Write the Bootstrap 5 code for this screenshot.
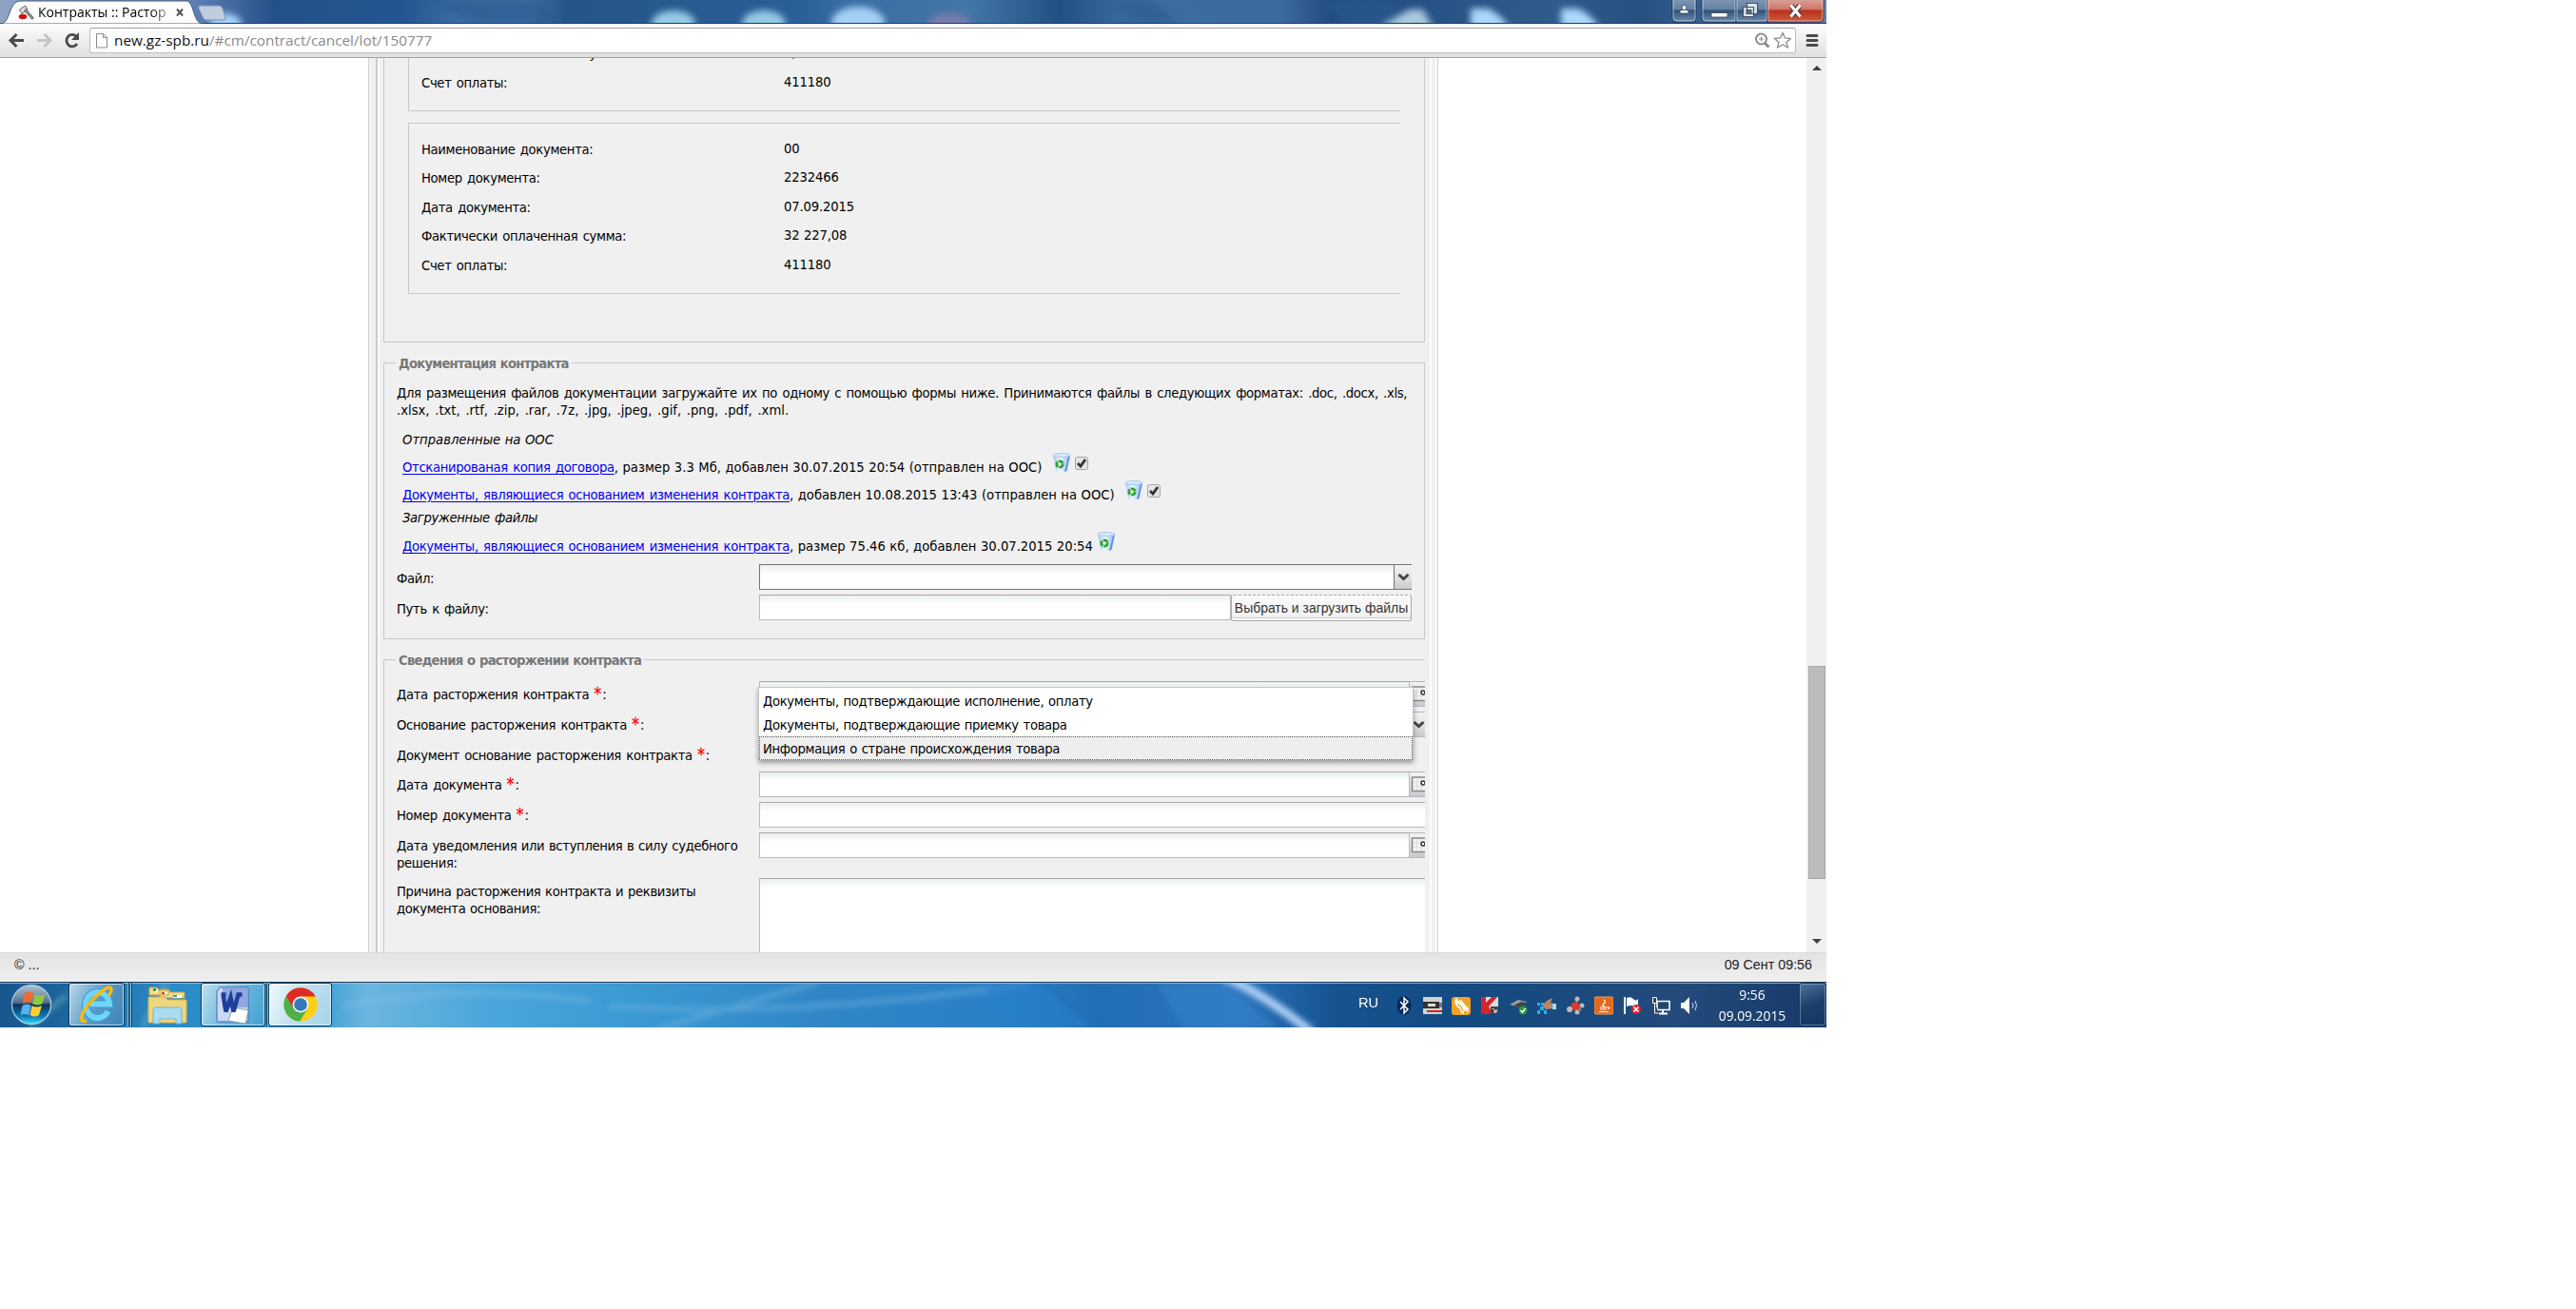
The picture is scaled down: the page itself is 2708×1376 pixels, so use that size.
<!DOCTYPE html>
<html lang="ru">
<head>
<meta charset="utf-8">
<title>Контракты :: Расторжение</title>
<link href="https://cdn.jsdelivr.net/npm/bootstrap@5.3.0/dist/css/bootstrap.min.css" rel="stylesheet">
<style>
body{background:#fff;color:#000;overflow:hidden}
.screen{width:1920px;height:1080px;overflow:hidden;font:14.67px/18px "DejaVu Sans Condensed","DejaVu Sans",sans-serif;font-stretch:condensed}
.screen span,.screen a{white-space:nowrap}
.titlebar{height:25px;background:#24548c;flex:none}
.backdrop{position:absolute;left:0;top:0}
.uifont{font-family:"Open Sans",sans-serif;font-stretch:normal}
.tabtitle{margin-left:40px;width:138px;font-size:14px;line-height:21px;padding-top:2px;height:25px;-webkit-mask-image:linear-gradient(90deg,#000 118px,rgba(0,0,0,.3) 138px)}
.toolbar{height:36px;background:linear-gradient(#fdfdfd,#e0e0e0);border-bottom:1px solid #a3a3a3;flex:none;padding:4px 8px 0 6px}
.omnibox{height:27px;width:1794px;margin-left:9px;background:#fff;border:1px solid #bdbdbd;border-top-color:#a0a0a0;border-radius:3px;padding-left:6px}
.omnibox .host{font-size:15.3px;line-height:25px;color:#8a8a8a;margin-left:7px}
.omnibox b{font-weight:400;color:#111}
.viewport{height:940px;overflow:hidden;flex:none;background:#fff}
.panelbox{width:1125px;height:940px;margin-left:387px;padding:0 14px 0 16px;letter-spacing:-.33px;word-spacing:1.45px;background:linear-gradient(90deg,#cfcfcf 1px,#f6f6f6 1px 2px,#f0f0f0 2px 8px,#ccc 8px 10px,#fbfbfb 10px 12px,#f0f0f0 12px 1116px,#fcfcfc 1116px 1118px,#f0f0f0 1118px 1122px,#fcfcfc 1122px 1124px,#cfcfcf 1124px)}
.tight{word-spacing:.7px}
.plain{letter-spacing:0;word-spacing:.3px}
.exts{letter-spacing:0;word-spacing:1.5px}
.fset{border:1px solid #c8c8c8;flex:none}
.fset-a{height:299px;border-top:0;padding-left:25px}
.fset-b{height:291px;margin-top:21px}
.fset-c{height:400px;margin-top:21px;border-right:0}
.docbox{border:1px solid #c8c8c8;border-right:0;width:1043px;padding-left:13px}
.docbox.cut{height:56px;border-top:0;padding-top:0;overflow:hidden}
.docbox.whole{height:180px;margin-top:12px;padding-top:11.5px}
.docrow{height:30.5px}
.docbox.cut .docrow:first-child{margin-top:-20px}
.docrow>:first-child{width:381px}
.docrow>:last-child{margin-top:-2px;letter-spacing:-.15px;word-spacing:.5px}
.fhead{font-weight:700;color:#777;background:#f0f0f0;width:fit-content;margin:-9px 0 0 12px;padding:0 3px;height:18px;letter-spacing:-.75px;word-spacing:.8px}
.bodypad{padding-left:13px;padding-top:13px}
.fset-c .bodypad{padding-top:13px}
.filelink{height:18px;margin-left:6px}
.filelink svg{margin-top:-6px}
.filelink a{color:#00e;text-decoration:underline;text-underline-offset:2px;text-decoration-thickness:1px}
.gap6{margin-top:6px}.gap10{margin-top:10px}.gap11{margin-top:11px}.gap12{margin-top:12px}.gap13{margin-top:13px}.gap5{margin-top:5px}
.fi{height:27px;background:linear-gradient(#eaeeee,#fff 9px);border:1px solid #b9b9b9;border-top-color:#aaa}
.fi.dark{border-color:#737373}
.w-date{width:684px}.w-file{width:668px}.w-path{width:496px}.w-open{width:700px}
.area{height:110px}
.trig{height:27px;width:16px;flex:none;overflow:hidden;background:linear-gradient(#f4f4f4,#ddd 60%,#c9c9c9);border-top:1px solid #b5b5b5;border-bottom:1px solid #b5b8c8}
.trig.dark{width:18px;border-color:#737373}
.lab{width:381px;flex:none;padding-top:6px}
.fset-c .lab{padding-top:5px}
.r31{height:31px}.r32{height:32px}.r48{height:48px}
.req{color:#f00;font-weight:400;font-size:17px;line-height:10px;letter-spacing:1px;-webkit-text-stroke:.3px #f00}
.upbtn{width:190px;height:28px;border:1px solid #aaa;border-top-style:dashed;border-radius:3px;background:linear-gradient(#fafafa,#f0f0f0);box-shadow:inset 0 -2px 0 #fff,inset 0 -3px 0 #ccc;color:#333;font:13.95px/27px "Liberation Sans",sans-serif;text-align:center;letter-spacing:0;word-spacing:0}
.dd{position:absolute;left:-1px;top:6px;width:689px;height:77px;background:#fff;border:1px solid #c4c4c4;border-bottom-color:#999;box-shadow:0 3px 5px rgba(0,0,0,.35);z-index:5;padding-top:3px;word-spacing:.9px}
.ddi{height:24.5px;line-height:21px;padding-left:4px}
.ddi.sel{background:#eee;outline:1px dotted #555;outline-offset:-1px;line-height:25px;margin-top:-1px;height:25px}
.sbar{width:21px;background:#f0f0f0;margin-left:auto}
.sthumb{width:18px;height:224px;background:#bcbcbc;border:1px solid #a8a8a8;margin-top:619px}
.statusline{height:31px;flex:none;background:linear-gradient(#e4e4e4,#efefef);border-top:1px solid #d9d9d9;padding:0 15px 0 15px;font-family:"Liberation Sans",sans-serif;font-size:14.3px;line-height:25px;color:#222}
.taskbar{height:48px;flex:none;background:#2b86c8}
.tbtn{height:46px;border:1px solid #0d3a5c;border-radius:3px;box-shadow:inset 0 0 0 1px rgba(255,255,255,.65);flex:none}
.tb-ie{width:59px;margin-left:17px;background:linear-gradient(115deg,#b9d8ea,#5d9ac6 50%,#3e83b8)}
.tb-word{width:68px;margin-left:14px;background:linear-gradient(115deg,#bfe0ef,#6cb8dd 50%,#45a2d3)}
.tb-chrome{width:67px;margin-left:3px;background:linear-gradient(115deg,#f2fafd,#bfe0ef 50%,#a5d4ea)}
.tb-show{width:29px;margin-left:4px;background:linear-gradient(160deg,#4d739c,#1b3e6b 50%,#173762);box-shadow:inset 0 0 0 1px rgba(255,255,255,.3)}
.orb{margin-left:11px}
.folder{margin-left:24px}
.lang{font:14.6px/18px "Liberation Sans",sans-serif;margin-bottom:4px}
.tray{margin-left:17px;margin-top:2px;gap:10px}
.clock{width:90px;margin-left:11px;margin-top:1px;color:#fff;text-align:center;font-size:13.8px;line-height:22px}
</style>
</head>
<body>
<div class="screen d-flex flex-column">
 <div class="titlebar position-relative">
  <svg class="backdrop" width="1920" height="25">
   <defs>
    <linearGradient id="tb"><stop offset="0" stop-color="#8fa3c4"/><stop offset=".1" stop-color="#6487b8"/><stop offset=".15" stop-color="#245089"/><stop offset=".22" stop-color="#235590"/><stop offset=".25" stop-color="#3c6ba2"/><stop offset=".29" stop-color="#3f70a6"/><stop offset=".31" stop-color="#265588"/><stop offset=".44" stop-color="#2a5f98"/><stop offset=".46" stop-color="#386ca3"/><stop offset=".53" stop-color="#4576a8"/><stop offset=".58" stop-color="#225082"/><stop offset=".62" stop-color="#3d6ca2"/><stop offset=".70" stop-color="#3d6ba0"/><stop offset=".73" stop-color="#214b80"/><stop offset=".85" stop-color="#2f5c8c"/><stop offset=".9" stop-color="#255081"/><stop offset="1" stop-color="#5b84b4"/></linearGradient>
    <filter id="bl" filterUnits="userSpaceOnUse" x="0" y="-30" width="1920" height="90"><feGaussianBlur stdDeviation="3.500"/></filter>
    <linearGradient id="wb" x2="0" y2="1"><stop offset="0" stop-color="#7f97b4"/><stop offset=".45" stop-color="#6380a4"/><stop offset=".5" stop-color="#2f5278"/><stop offset="1" stop-color="#6c8cae"/></linearGradient>
    <linearGradient id="cb" x2="0" y2="1"><stop offset="0" stop-color="#d9a49a"/><stop offset=".45" stop-color="#cf7568"/><stop offset=".5" stop-color="#b93019"/><stop offset="1" stop-color="#cc5c40"/></linearGradient>
   </defs>
   <rect width="1920" height="25" fill="url(#tb)"/>
   <g fill="#2a5a90" opacity=".6"><path d="M450 0h120l20 25h-90zM1170 0h40l30 25h-50zM1390 0h60l70 25h-110z" filter="url(#bl)"/></g>
   <g filter="url(#bl)"><ellipse cx="237" cy="26" rx="17" ry="12" fill="#a6d3ff"/><ellipse cx="708" cy="25" rx="23" ry="14" fill="#96c9e4"/><ellipse cx="803" cy="25" rx="23" ry="14" fill="#96c9e4"/><ellipse cx="902" cy="24" rx="28" ry="17" fill="#a4d0f6"/><ellipse cx="998" cy="25" rx="22" ry="11" fill="#8a80ac" opacity=".75"/><path d="M1450 28l32-18h14l12 22z" fill="#a9c8dd"/><path d="M1546 9h18q20 10 24 26h-42z" fill="#aad9fb"/><path d="M1641 9h18q20 10 24 26h-42z" fill="#aad9fb"/></g>
   <rect y="24" width="1920" height="1" fill="#1c3c66"/>
   <path d="M0 25C12 25 8 1 22 1H196c8 0 7 24 17 24z" fill="#fdfdfd" stroke="#40597d" stroke-width="1"/>
   <path d="M210 6h20q3 0 4 3l3 9q1 3-2 3h-18q-3 0-4-3l-4-9q-1-3 1-3z" fill="#bfccdd" stroke="#7d92b0"/>
   <path d="M20.500 10l6-4 2.500 4-6 4.500z" fill="#ddd" stroke="#666"/><path d="M26 10l9 10" stroke="#666" stroke-width="3"/><path d="M26 10l9 10" stroke="#bbb"/><ellipse cx="24" cy="17.500" rx="4.300" ry="2.800" fill="#c11"/>
   <path d="M186 9.500l6 7M192 9.500l-6 7" stroke="#555" stroke-width="2"/>
   <g stroke="#1b3553"><path d="M1758 -1v20q0 4 4 4h17q4 0 4-4v-20z" fill="url(#wb)"/><path d="M1789 -1v20q0 4 4 4h32v-24z" fill="url(#wb)"/><path d="M1825 -1v24h33v-24z" fill="url(#wb)"/><path d="M1858 -1v24h55q4 0 4-4v-20z" fill="url(#cb)" stroke="#4f1c20"/></g>
   <path d="M1759 0v19q0 3 3 3h17q3 0 3-3v-19M1790 0v19q0 3 3 3h31v-22M1826 0v22h31v-22M1859 0v22h54q3 0 3-3v-19" fill="none" stroke="#fff" stroke-opacity=".55"/>
   <g fill="#fff" stroke="#33445c" stroke-width=".8"><circle cx="1770.500" cy="8" r="2.500"/><path d="M1766 14v-2q0-1.500 2-1.500h5q2 0 2 1.500v2z"/><rect x="1799" y="13.500" width="17" height="4.500"/></g>
   <path d="M1836.500 3.500h11v11h-11zM1832.500 7.500h11v10h-11z" fill="#dfe6ee" stroke="#46546a" stroke-width="1.200"/><rect x="1836" y="10.500" width="5" height="4" fill="#56708f" stroke="#46546a"/>
   <path d="M1883 6l9 11M1892 6l-9 11" stroke="#4a3a44" stroke-width="5.500"/><path d="M1882.500 5.500l10 12M1892.500 5.500l-10 12" stroke="#fff" stroke-width="3.300"/>
  </svg>
  <div class="tabtitle uifont position-relative"><span>Контракты :: Растор</span></div>
 </div>

 <div class="toolbar d-flex">
  <svg width="79" height="27" fill="none"><path d="M5 13.500h14M11.500 7L5 13.500l6.500 6.500" stroke="#4a4a4a" stroke-width="3"/><path d="M33 13.500h14M40.500 7l6.500 6.500-6.500 6.500" stroke="#c4c4c4" stroke-width="3"/><path d="M74.500 9.500A6 6.300 0 1 0 75 17" stroke="#4a4a4a" stroke-width="2.800"/><path d="M77 5v8h-8z" fill="#4a4a4a"/></svg>
  <div class="omnibox d-flex uifont">
   <svg width="12" height="24" fill="#fff" stroke="#8a8a8a"><path d="M.5 5.500h7l4 4v10.500h-11zM7.500 5.500v4h4"/></svg>
   <span class="host"><b>new.gz-spb.ru</b>/#cm/contract/cancel/lot/150777</span>
   <svg class="ms-auto me-1" width="40" height="25" fill="none" stroke="#8b8b8b"><circle cx="8.500" cy="11" r="5.500" stroke-width="2"/><path d="M6 11h5M8.500 8.500v5"/><path d="M12.500 15.500l4 4" stroke-width="3"/><path d="M31 4.500l2.500 5.500 6 .5-4.500 4 1.500 5.500-5.500-3-5.500 3 1.500-5.500-4.500-4 6-.5z" stroke-width="1.300"/></svg>
  </div>
  <svg width="24" height="27"><path d="M12 8.500h10M12 13.500h10M12 18.500h10" stroke="#4b4b4b" stroke-width="3" stroke-linecap="round"/></svg>
 </div>

 <div class="viewport d-flex">
  <div class="panelbox d-flex flex-column">
   <div class="fset fset-a">
    <div class="docbox cut">
     <div class="docrow d-flex align-items-center"><span>Фактически оплаченная сумма:</span><span>0,00</span></div>
     <div class="docrow d-flex align-items-center"><span>Счет оплаты:</span><span>411180</span></div>
    </div>
    <div class="docbox whole">
     <div class="docrow d-flex align-items-center"><span>Наименование документа:</span><span>00</span></div>
     <div class="docrow d-flex align-items-center"><span>Номер документа:</span><span>2232466</span></div>
     <div class="docrow d-flex align-items-center"><span>Дата документа:</span><span>07.09.2015</span></div>
     <div class="docrow d-flex align-items-center"><span>Фактически оплаченная сумма:</span><span>32 227,08</span></div>
     <div class="docrow d-flex align-items-center"><span>Счет оплаты:</span><span>411180</span></div>
    </div>
   </div>

   <div class="fset fset-b">
    <div class="fhead"><span>Документация контракта</span></div>
    <div class="bodypad">
     <div><span>Для размещения файлов документации загружайте их по одному с помощью формы ниже. Принимаются файлы в следующих форматах: .doc, .docx, .xls,</span><br><span class="exts">.xlsx, .txt, .rtf, .zip, .rar, .7z, .jpg, .jpeg, .gif, .png, .pdf, .xml.</span></div>
     <div class="filelink fst-italic gap13"><span class="plain">Отправленные на ООС</span></div>
     <div class="filelink d-flex gap11"><span><a href="#">Отсканированая копия договора</a><span class="plain">, размер 3.3 Мб, добавлен 30.07.2015 20:54 (отправлен на ООС)</span></span><svg class="ms-2" width="42" height="24"><use href="#bin" x="3"/><use href="#chk" x="27" y="4"/></svg></div>
     <div class="filelink d-flex gap11"><span><a href="#">Документы, являющиеся основанием изменения контракта</a><span class="plain">, добавлен 10.08.2015 13:43 (отправлен на ООС)</span></span><svg class="ms-2" width="42" height="24"><use href="#bin" x="2"/><use href="#chk" x="26" y="4"/></svg></div>
     <div class="filelink fst-italic gap6"><span>Загруженные файлы</span></div>
     <div class="filelink d-flex gap12"><span><a href="#">Документы, являющиеся основанием изменения контракта</a><span class="plain">, размер 75.46 кб, добавлен 30.07.2015 20:54</span></span><svg class="ms-1" width="24" height="24"><use href="#bin"/></svg></div>
     <div class="d-flex gap10"><div class="lab"><span>Файл:</span></div><div class="fi dark w-file"></div><div class="trig dark"><svg width="18" height="25"><use href="#chev"/></svg></div></div>
     <div class="d-flex gap5"><div class="lab"><span>Путь к файлу:</span></div><div class="fi w-path"></div><div class="upbtn"><span>Выбрать и загрузить файлы</span></div></div>
    </div>
   </div>

   <div class="fset fset-c">
    <div class="fhead"><span>Сведения о расторжении контракта</span></div>
    <div class="bodypad">
     <div class="d-flex r32"><div class="lab"><span>Дата расторжения контракта <b class="req">*</b>:</span></div>
      <div class="d-flex flex-fill position-relative"><div class="fi w-date"></div><div class="trig"><svg width="16" height="25"><use href="#cal"/></svg></div>
       <div class="dd"><div class="ddi"><span>Документы, подтверждающие исполнение, оплату</span></div><div class="ddi"><span>Документы, подтверждающие приемку товара</span></div><div class="ddi sel"><span>Информация о стране происхождения товара</span></div></div>
      </div></div>
     <div class="d-flex r32"><div class="lab"><span>Основание расторжения контракта <b class="req">*</b>:</span></div><div class="fi w-date"></div><div class="trig"><svg width="16" height="25"><use href="#chev"/></svg></div></div>
     <div class="d-flex r31"><div class="lab"><span>Документ основание расторжения контракта <b class="req">*</b>:</span></div></div>
     <div class="d-flex r32"><div class="lab"><span>Дата документа <b class="req">*</b>:</span></div><div class="fi w-date"></div><div class="trig"><svg width="16" height="25"><use href="#cal"/></svg></div></div>
     <div class="d-flex r32"><div class="lab"><span>Номер документа <b class="req">*</b>:</span></div><div class="fi border-end-0 w-open"></div></div>
     <div class="d-flex r48"><div class="lab tight"><span>Дата уведомления или вступления в силу судебного</span><br><span>решения:</span></div><div class="fi w-date"></div><div class="trig"><svg width="16" height="25"><use href="#cal"/></svg></div></div>
     <div class="d-flex"><div class="lab tight"><span>Причина расторжения контракта и реквизиты</span><br><span>документа основания:</span></div><div class="fi border-end-0 w-open area"></div></div>
    </div>
   </div>
  </div>
  <div class="sbar d-flex flex-column align-items-center">
   <svg width="20" height="20"><path d="M5 13l5-5 5 5z" fill="#404040"/></svg>
   <div class="sthumb"></div>
   <svg class="mt-auto" width="20" height="20"><path d="M5 6l5 5 5-5z" fill="#404040"/></svg>
  </div>
 </div>

 <div class="statusline d-flex justify-content-between"><span>© ...</span><span>09 Сент 09:56</span></div>

 <div class="taskbar d-flex align-items-center position-relative">
  <svg class="backdrop" width="1920" height="48">
   <defs>
    <linearGradient id="tk"><stop offset="0" stop-color="#17568c"/><stop offset=".05" stop-color="#1f6ba5"/><stop offset=".09" stop-color="#2a8ac5"/><stop offset=".17" stop-color="#2f98d2"/><stop offset=".2" stop-color="#6cb6e0"/><stop offset=".27" stop-color="#4aa5da"/><stop offset=".34" stop-color="#3b9bd2"/><stop offset=".45" stop-color="#3186c6"/><stop offset=".55" stop-color="#2b80c6"/><stop offset=".6" stop-color="#226eb4"/><stop offset=".68" stop-color="#2a74bc"/><stop offset=".73" stop-color="#165390"/><stop offset=".8" stop-color="#144a82"/><stop offset=".92" stop-color="#234a7a"/><stop offset="1" stop-color="#163a6a"/></linearGradient>
    <filter id="b2" filterUnits="userSpaceOnUse" x="0" y="-40" width="1920" height="130"><feGaussianBlur stdDeviation="3"/></filter>
   </defs>
   <rect width="1920" height="48" fill="url(#tk)"/>
   <g filter="url(#b2)"><path d="M30 48L70 14M150 48l26-48" stroke="#7fc6c8" stroke-width="5" opacity=".5"/><path d="M640 26Q840 38 1080 2M690 50Q780 24 860 0M360 26Q480 2 620 20" fill="none" stroke="#8bc4ee" stroke-width="5" opacity=".4"/><path d="M1030 0h60l60 50h-90z" fill="#2a80cc" opacity=".6"/><path d="M1286 -6Q1330 14 1380 54" fill="none" stroke="#b3d4f8" stroke-width="9"/><path d="M1215 0h70l60 50h-100z" fill="#3a86cc" opacity=".5"/></g>
   <rect width="1920" height="1" fill="#1c3a56"/><rect y="1" width="1920" height="1" fill="#9dc3e2" opacity=".8"/>
   <path d="M135.500 1v46M138.500 1v46M280.500 1v46" stroke="#12415f"/>
   <path d="M134.500 1v46M137.500 1v46M281.500 1v46" stroke="#a5d5ef" opacity=".7"/>
  </svg>
  <svg class="position-relative orb" width="44" height="48"><defs><linearGradient id="orb" x2="0" y2="1"><stop offset="0" stop-color="#b4c2d0"/><stop offset=".45" stop-color="#53708e"/><stop offset=".5" stop-color="#0c3358"/><stop offset=".8" stop-color="#0a7bb4"/><stop offset="1" stop-color="#35e0ff"/></linearGradient></defs><circle cx="22" cy="24" r="20.500" fill="url(#orb)" stroke="#a4cde4" stroke-width="1.300"/><path d="M15 12q5-3 9 0l-2 10q-5-2-9 1z" fill="#ee6a30"/><path d="M25.500 13q5 3 11 0l-3 10q-5 3-10.500 0z" fill="#8fc942"/><path d="M12.500 25q5-3 9 0l-2 10q-5-2-9 0z" fill="#58b1f0"/><path d="M22.500 25q5 3 10.500 0l-3 10q-4 3-9.500 0z" fill="#ffcc33"/></svg>
  <div class="tbtn tb-ie position-relative d-flex align-items-center justify-content-center"><svg width="42" height="42" fill="none"><path d="M32.500 28a12.500 13.500 0 1 1 1.500-7.500H14" stroke="#2f9fdc" stroke-width="8"/><path d="M32.500 28a12.500 13.500 0 1 1 1.500-7.500H14" stroke="#74d5f8" stroke-width="6"/><path d="M10 38c-8 3-7-6 2-17S35-2 36 5q0 3-3 7" stroke="#f3bb16" stroke-width="3.500"/></svg></div>
  <svg class="position-relative folder" width="42" height="44"><path d="M2 4h8l2 3h10v5H2zM13 6h9l2 3h15v6H13z" fill="#f2dc8a" stroke="#c7a449"/><path d="M6 6h5v3H6zM16 9h5v2h-5zM27 12h9v3H27z" fill="#fff"/><path d="M6 5h3v3H6z" fill="#2b9a3e"/><path d="M15 9h3v2h-3z" fill="#d33"/><path d="M27 12h4v2h-4z" fill="#39c"/><path d="M1 14h17l3 3h20v23q0 1-1 1H2q-1 0-1-1z" fill="#efd67d" stroke="#d2b055"/><path d="M6 28q0-3 3-3h24q3 0 3 3v14h-6v-5H13v5H6z" fill="#a9dcef" stroke="#6eb3d4"/></svg>
  <div class="tbtn tb-word position-relative d-flex align-items-center justify-content-center"><svg width="40" height="40"><path d="M6 2h30v36H3V6z" fill="#c9d8f3" stroke="#4666b0"/><path d="M9 3h26v20H9z" fill="#8fa8e0"/><path d="M20 23l16 3-3 14-18-3z" fill="#fff" stroke="#8aa"/><path d="M7.500 9.500h5M9.500 9.500l3 18 5-15 3 15 5-18M23.500 9.500h6" fill="none" stroke="#1c3f9b" stroke-width="4.500"/></svg></div>
  <div class="tbtn tb-chrome position-relative d-flex align-items-center justify-content-center"><svg width="36" height="38" viewBox="-18 -19 36 38"><circle r="17.700" fill="#ffd015"/><path d="M-15.300-8.900A17.700 17.700 0 0 1 15.600-8.500H0L-8 4z" fill="#df2b25"/><path d="M-15.400-8.800A17.700 17.700 0 0 0-1 17.700L7.500 4-7 4.500z" fill="#4caf48"/><circle r="8.500" fill="#f5f5f5"/><circle r="6.800" fill="#3579c0"/></svg></div>

  <div class="ms-auto position-relative d-flex align-items-center h-100">
   <span class="text-white lang">RU</span>
   <div class="tray d-flex align-items-center">
    <svg width="20" height="20"><ellipse cx="10" cy="10" rx="7.500" ry="10" fill="#06285a"/><path d="M6 6l8 8-4 4V2l4 4-8 8" fill="none" stroke="#fff" stroke-width="1.500"/></svg>
    <svg width="20" height="20"><path d="M0 1h20v18H0z" fill="#cdd6d0"/><path d="M0 6h17v7H0z" fill="#333"/><path d="M5 8h8v3H5z" fill="#ddd"/><path d="M17 7h3v5h-3z" fill="#777"/><path d="M4 15h16v2H4z" fill="#d22"/></svg>
    <svg width="20" height="20"><rect y="1" width="20" height="19" rx="3" fill="#f0a428"/><path d="M5 1l2 4 3-1 4 5 4 4-1 5-2-3-2 1v3l-3-1-1-4-4-3-2-5z" fill="#fff8e4"/><path d="M6 9l4 2 2 5" stroke="#d78b1b" fill="none"/></svg>
    <svg width="20" height="20"><path d="M1 1h18v18H1z" fill="#ddd"/><path d="M1 1h5v6l6-6h6L9 11l4 8H1z" fill="#d8222c"/><path d="M11 11h8v8h-8z" fill="#444"/><path d="M13 13l4 4v-3M17 17h-3" stroke="#fff" fill="none"/></svg>
    <svg width="20" height="20"><path d="M1 9l9-5 9 2-8 6z" fill="#9ba1a5"/><path d="M5 10l8-4 6 1-8 5z" fill="#444"/><circle cx="15" cy="15" r="4.500" fill="#259a35"/><path d="M12.500 15l2 2 3-4" stroke="#fff" stroke-width="1.500" fill="none"/></svg>
    <svg width="20" height="20"><path d="M0 7h3v3H0zM4 7h3v3H4zM3 11h4v4H3zM0 15h3v4H0zM7 15h3v4H7zM8 11h3v3H8z" fill="#25aef0"/><path d="M7 8l3-3 6-3-2 5 3 1v5l-8 1-3-3z" fill="#b88762"/><path d="M16 8h4v6h-4z" fill="#aad6ee"/></svg>
    <svg width="20" height="20"><path d="M5 14l5-4 2-6M10 10l6 5" stroke="#999" stroke-width="2"/><circle cx="10" cy="11" r="4.500" fill="#d93a2c"/><g fill="#bbb"><circle cx="12" cy="3" r="2.500"/><circle cx="4" cy="14" r="3"/><circle cx="12" cy="17" r="2.500"/><circle cx="17" cy="10" r="2.500"/></g></svg>
    <svg width="20" height="20"><rect y="1" width="20" height="18" rx="2" fill="#e2691c" stroke="#f29d5d"/><path d="M10 4q3 2 0 4t1 3M6 12h8q3-1 1 2M6 14h7M5 16.500h10" stroke="#fff" fill="none" stroke-width="1.200"/></svg>
    <svg width="20" height="20"><path d="M2 1v18" stroke="#fff" stroke-width="2"/><path d="M4 2q4-2 7 1t5 0v8q-3 2-5 0t-7 0z" fill="#fff"/><circle cx="14" cy="14" r="5" fill="#dc2430"/><path d="M11.500 11.500l5 5M16.500 11.500l-5 5" stroke="#fff" stroke-width="1.600"/></svg>
    <svg width="20" height="20" fill="none" stroke="#fff"><path d="M6 5.500h13v9H6z" fill="#23466d" stroke-width="1.600"/><path d="M12 15v3M8 18.500h9" stroke-width="2"/><path d="M1.500 1.500h4v6h-4zM3.500 7v11h4" fill="#345"/></svg>
    <svg width="20" height="20"><path d="M1 7h3l6-6v18l-6-6H1z" fill="#fff"/><path d="M13 7q2 3 0 6M16 5q3 5 0 10" stroke="#cfe0f0" fill="none"/></svg>
   </div>
   <div class="clock uifont"><div>9:56</div><div>09.09.2015</div></div>
   <div class="tbtn tb-show"></div>
  </div>
 </div>
</div>

<svg width="0" height="0" class="position-absolute">
 <defs><linearGradient id="bg1"><stop offset="0" stop-color="#9cc3f2"/><stop offset=".4" stop-color="#f3f9ff"/><stop offset="1" stop-color="#8db6f0"/></linearGradient></defs>
 <symbol id="bin" width="20" height="21" viewBox="0 0 20 21"><path d="M1 2l3 17q5 2 10 0L19 2z" fill="url(#bg1)"/><path d="M13 20l2.500-1L19 3l-2 1z" fill="#5d92e4"/><ellipse cx="10" cy="2.500" rx="9" ry="2" fill="#d9e9fc" stroke="#a5c8f2"/><circle cx="8" cy="12" r="3.200" fill="none" stroke="#2ba52b" stroke-width="2.800" stroke-dasharray="5.700 1"/></symbol>
 <symbol id="chk" width="15" height="15" viewBox="0 0 15 15"><rect x=".5" y=".5" width="13" height="13" rx="2" fill="#e4e4e4" stroke="#a5a5a5"/><path d="M3 7l3 3 5-7" fill="none" stroke="#333" stroke-width="2.800"/></symbol>
 <symbol id="cal" width="18" height="25" viewBox="0 0 18 25"><path d="M2.500 5.500h15v14h-15z" fill="#f2f2f2"/><path d="M3 10h14M3 14.500h14M7.500 6v13M12 6v13" stroke="#dedede"/><path d="M2 5h16M2.500 5v14.500h16" stroke="#8a8a8a" stroke-width="1.600" fill="none"/><circle cx="14" cy="11" r="2" fill="#fff" stroke="#333" stroke-width="1.500"/></symbol>
 <symbol id="chev" width="18" height="25" viewBox="0 0 18 25"><path d="M4.500 10l5 4.500 5-4.500" fill="none" stroke="#444" stroke-width="3"/></symbol>
</svg>
<script src="https://cdn.jsdelivr.net/npm/bootstrap@5.3.0/dist/js/bootstrap.bundle.min.js"></script>
</body>
</html>
